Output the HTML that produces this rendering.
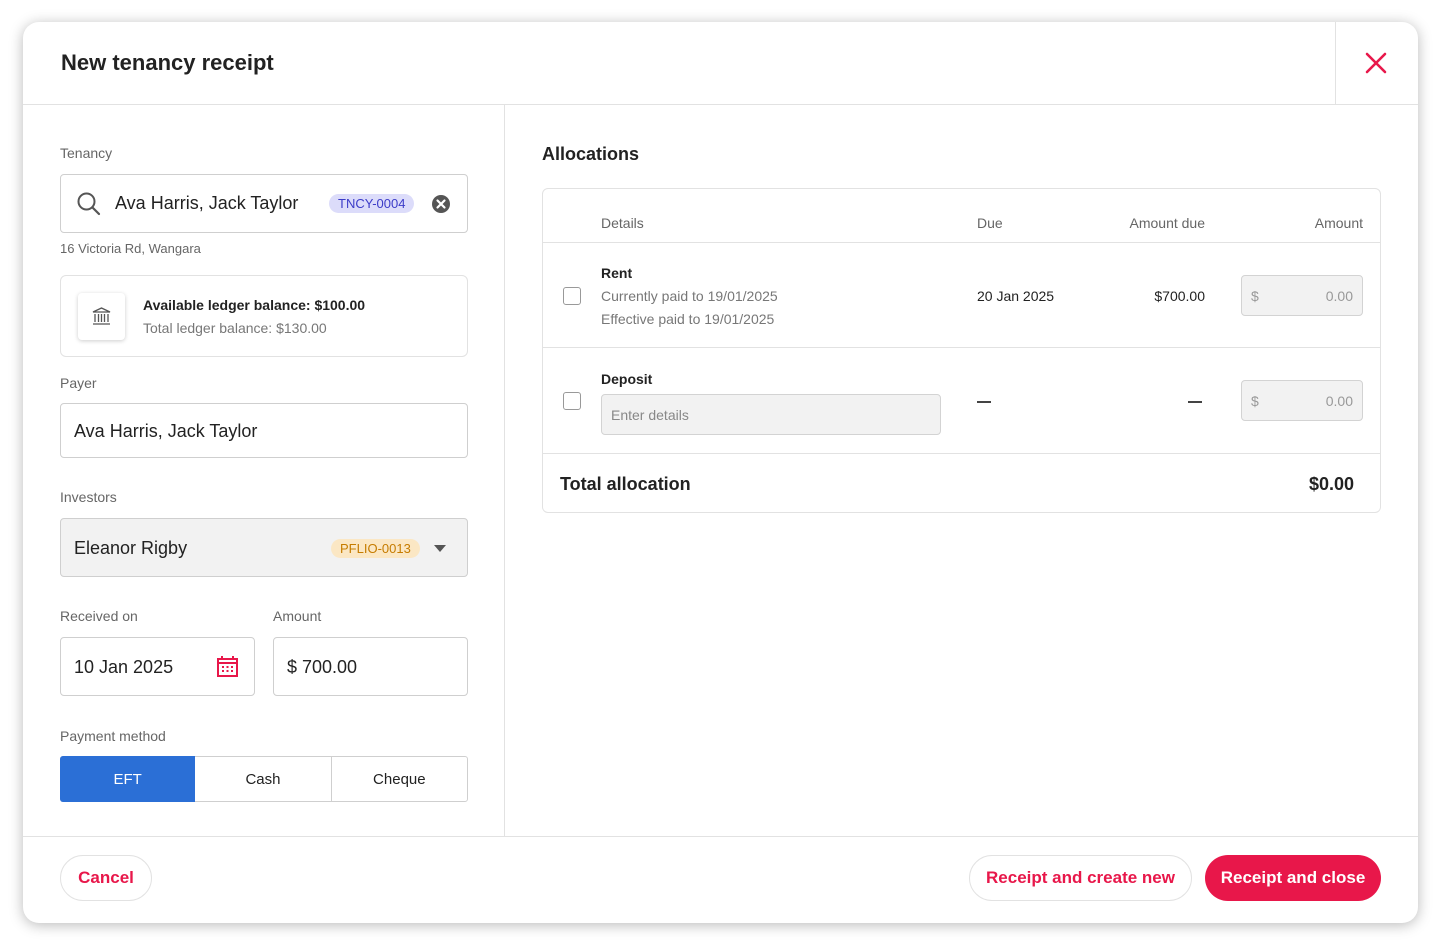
<!DOCTYPE html>
<html><head><meta charset="utf-8"><style>
*{box-sizing:border-box;margin:0;padding:0}
body{width:1440px;height:947px;background:#fff;font-family:"Liberation Sans",sans-serif;color:#222;position:relative;overflow:hidden}
.modal{position:absolute;left:23px;top:22px;width:1395px;height:901px;background:#fff;border-radius:16px;box-shadow:0 2px 14px rgba(0,0,0,.28);overflow:hidden}
.a{position:absolute}
.lbl{font-size:14px;color:#666}
.inp{position:absolute;border:1px solid #cfcfcf;border-radius:4px;background:#fff}
.t{font-size:18px;color:#222}
.chip{position:absolute;font-size:13px;border-radius:10px;padding:2px 9px}
.btn{position:absolute;height:46px;border-radius:23px;font-size:17px;font-weight:bold;display:flex;align-items:center;justify-content:center}
.small{font-size:14px}
.g{color:#777}
.amt{position:absolute;width:122px;height:41px;background:#f2f2f2;border:1px solid #d3d3d3;border-radius:4px;font-size:14px;color:#999}
.cb{position:absolute;width:18px;height:18px;border:1.5px solid #999;border-radius:3px}
</style></head><body>
<div class="modal">
 <div class="a" style="left:38px;top:28px;font-size:22px;font-weight:bold;color:#222">New tenancy receipt</div>
 <div class="a" style="left:1312px;top:0;width:1px;height:82px;background:#e2e2e2"></div>
 <svg class="a" style="left:1342px;top:30px" width="22" height="22" viewBox="0 0 22 22"><path d="M2 2L20 20M20 2L2 20" stroke="#e8174a" stroke-width="2.6" stroke-linecap="round"/></svg>
 <div class="a" style="left:0;top:82px;width:1395px;height:1px;background:#e2e2e2"></div>
 <div class="a" style="left:481px;top:83px;width:1px;height:731px;background:#e2e2e2"></div>
 <div class="a" style="left:0;top:814px;width:1395px;height:1px;background:#e2e2e2"></div>

 <!-- left -->
 <div class="a lbl" style="left:37px;top:123px">Tenancy</div>
 <div class="inp" style="left:37px;top:152px;width:408px;height:59px">
  <svg class="a" style="left:15px;top:16px" width="26" height="26" viewBox="0 0 26 26"><circle cx="10.5" cy="10.5" r="8" fill="none" stroke="#555" stroke-width="2"/><path d="M16.5 16.5L23 23" stroke="#555" stroke-width="2.2" stroke-linecap="round"/></svg>
  <div class="a t" style="left:54px;top:18px">Ava Harris, Jack Taylor</div>
  <div class="chip" style="left:268px;top:19px;background:#dcdcfa;color:#3c3cc8">TNCY-0004</div>
  <svg class="a" style="left:370px;top:19px" width="20" height="20" viewBox="0 0 20 20"><circle cx="10" cy="10" r="9" fill="#555"/><path d="M6.5 6.5L13.5 13.5M13.5 6.5L6.5 13.5" stroke="#fff" stroke-width="2.2" stroke-linecap="round"/></svg>
 </div>
 <div class="a" style="left:37px;top:219px;font-size:13px;color:#666">16 Victoria Rd, Wangara</div>
 <div class="a" style="left:37px;top:253px;width:408px;height:82px;border:1px solid #e2e2e2;border-radius:6px">
  <div class="a" style="left:17px;top:17px;width:47px;height:47px;border-radius:4px;box-shadow:0 1px 4px rgba(0,0,0,.2);background:#fff">
   <svg class="a" style="left:13px;top:13px" width="21" height="21" viewBox="0 0 21 21" fill="none" stroke="#555" stroke-width="1.3"><path d="M2 6L10.5 2L19 6Z"/><path d="M4 8V16M7.5 8V16M10.5 8V16M13.5 8V16M17 8V16M2 18H19"/></svg>
  </div>
  <div class="a" style="left:82px;top:21px;font-size:14px;font-weight:bold;color:#222">Available ledger balance: $100.00</div>
  <div class="a" style="left:82px;top:44px;font-size:14px;color:#777">Total ledger balance: $130.00</div>
 </div>
 <div class="a lbl" style="left:37px;top:353px">Payer</div>
 <div class="inp" style="left:37px;top:381px;width:408px;height:55px"><div class="a t" style="left:13px;top:17px">Ava Harris, Jack Taylor</div></div>
 <div class="a lbl" style="left:37px;top:467px">Investors</div>
 <div class="inp" style="left:37px;top:496px;width:408px;height:59px;background:#f2f2f2"><div class="a t" style="left:13px;top:19px">Eleanor Rigby</div>
  <div class="chip" style="left:270px;top:20px;background:#fbe7c4;color:#c67c00">PFLIO-0013</div>
  <svg class="a" style="left:373px;top:26px" width="12" height="7" viewBox="0 0 12 7"><path d="M0 0H12L6 7Z" fill="#555"/></svg>
 </div>
 <div class="a lbl" style="left:37px;top:586px">Received on</div>
 <div class="a lbl" style="left:250px;top:586px">Amount</div>
 <div class="inp" style="left:37px;top:615px;width:195px;height:59px"><div class="a t" style="left:13px;top:19px">10 Jan 2025</div>
  <svg class="a" style="left:155px;top:17px" width="23" height="23" viewBox="0 0 23 23" fill="none" stroke="#e8174a" stroke-width="2"><rect x="2" y="4" width="19" height="17"/><path d="M2 8H21M6 1V5M17 1V5"/><g fill="#e8174a" stroke="none"><rect x="6" y="11" width="2" height="2"/><rect x="10.5" y="11" width="2" height="2"/><rect x="15" y="11" width="2" height="2"/><rect x="6" y="15" width="2" height="2"/><rect x="10.5" y="15" width="2" height="2"/><rect x="15" y="15" width="2" height="2"/></g></svg>
 </div>
 <div class="inp" style="left:250px;top:615px;width:195px;height:59px"><div class="a t" style="left:13px;top:19px">$ 700.00</div></div>
 <div class="a lbl" style="left:37px;top:706px">Payment method</div>
 <div class="a" style="left:37px;top:734px;width:408px;height:46px;border:1px solid #cfcfcf;border-radius:3px;display:flex;font-size:15px">
  <div style="flex:1;background:#2b6fd6;color:#fff;display:flex;align-items:center;justify-content:center;margin:-1px 0 -1px -1px;border-radius:3px 0 0 3px">EFT</div>
  <div style="flex:1;display:flex;align-items:center;justify-content:center;border-right:1px solid #cfcfcf">Cash</div>
  <div style="flex:1;display:flex;align-items:center;justify-content:center">Cheque</div>
 </div>

 <!-- right -->
 <div class="a" style="left:519px;top:122px;font-size:18px;font-weight:bold;color:#222">Allocations</div>
 <div class="a" style="left:519px;top:166px;width:839px;height:325px;border:1px solid #e2e2e2;border-radius:6px">
  <div class="a small g" style="left:58px;top:26px;color:#666">Details</div>
  <div class="a small" style="left:434px;top:26px;color:#666">Due</div>
  <div class="a small" style="right:175px;top:26px;color:#666">Amount due</div>
  <div class="a small" style="right:17px;top:26px;color:#666">Amount</div>
  <div class="a" style="left:0;top:53px;width:837px;height:1px;background:#e2e2e2"></div>
  <div class="cb" style="left:20px;top:98px"></div>
  <div class="a small" style="left:58px;top:76px;font-weight:bold;color:#222">Rent</div>
  <div class="a small g" style="left:58px;top:99px">Currently paid to 19/01/2025</div>
  <div class="a small g" style="left:58px;top:122px">Effective paid to 19/01/2025</div>
  <div class="a small" style="left:434px;top:99px;color:#222">20 Jan 2025</div>
  <div class="a small" style="right:175px;top:99px;color:#222">$700.00</div>
  <div class="amt" style="left:698px;top:86px"><span class="a" style="left:9px;top:12px">$</span><span class="a" style="right:9px;top:12px">0.00</span></div>
  <div class="a" style="left:0;top:158px;width:837px;height:1px;background:#e2e2e2"></div>
  <div class="cb" style="left:20px;top:203px"></div>
  <div class="a small" style="left:58px;top:182px;font-weight:bold;color:#222">Deposit</div>
  <div class="a" style="left:58px;top:205px;width:340px;height:41px;background:#f2f2f2;border:1px solid #d3d3d3;border-radius:4px"><span class="a small" style="left:9px;top:12px;color:#888">Enter details</span></div>
  <div class="a" style="left:434px;top:212px;width:14px;height:1.5px;background:#444"></div>
  <div class="a" style="left:645px;top:212px;width:14px;height:1.5px;background:#444"></div>
  <div class="amt" style="left:698px;top:191px"><span class="a" style="left:9px;top:12px">$</span><span class="a" style="right:9px;top:12px">0.00</span></div>
  <div class="a" style="left:0;top:264px;width:837px;height:1px;background:#e2e2e2"></div>
  <div class="a" style="left:17px;top:285px;font-size:18px;font-weight:bold;color:#222">Total allocation</div>
  <div class="a" style="right:26px;top:285px;font-size:18px;font-weight:bold;color:#222">$0.00</div>
 </div>

 <!-- footer -->
 <div class="btn" style="left:37px;top:833px;width:92px;border:1px solid #e2e2e2;color:#e8174a">Cancel</div>
 <div class="btn" style="left:946px;top:833px;width:223px;border:1px solid #e2e2e2;color:#e8174a">Receipt and create new</div>
 <div class="btn" style="left:1182px;top:833px;width:176px;background:#e8174a;color:#fff">Receipt and close</div>
</div>
</body></html>
